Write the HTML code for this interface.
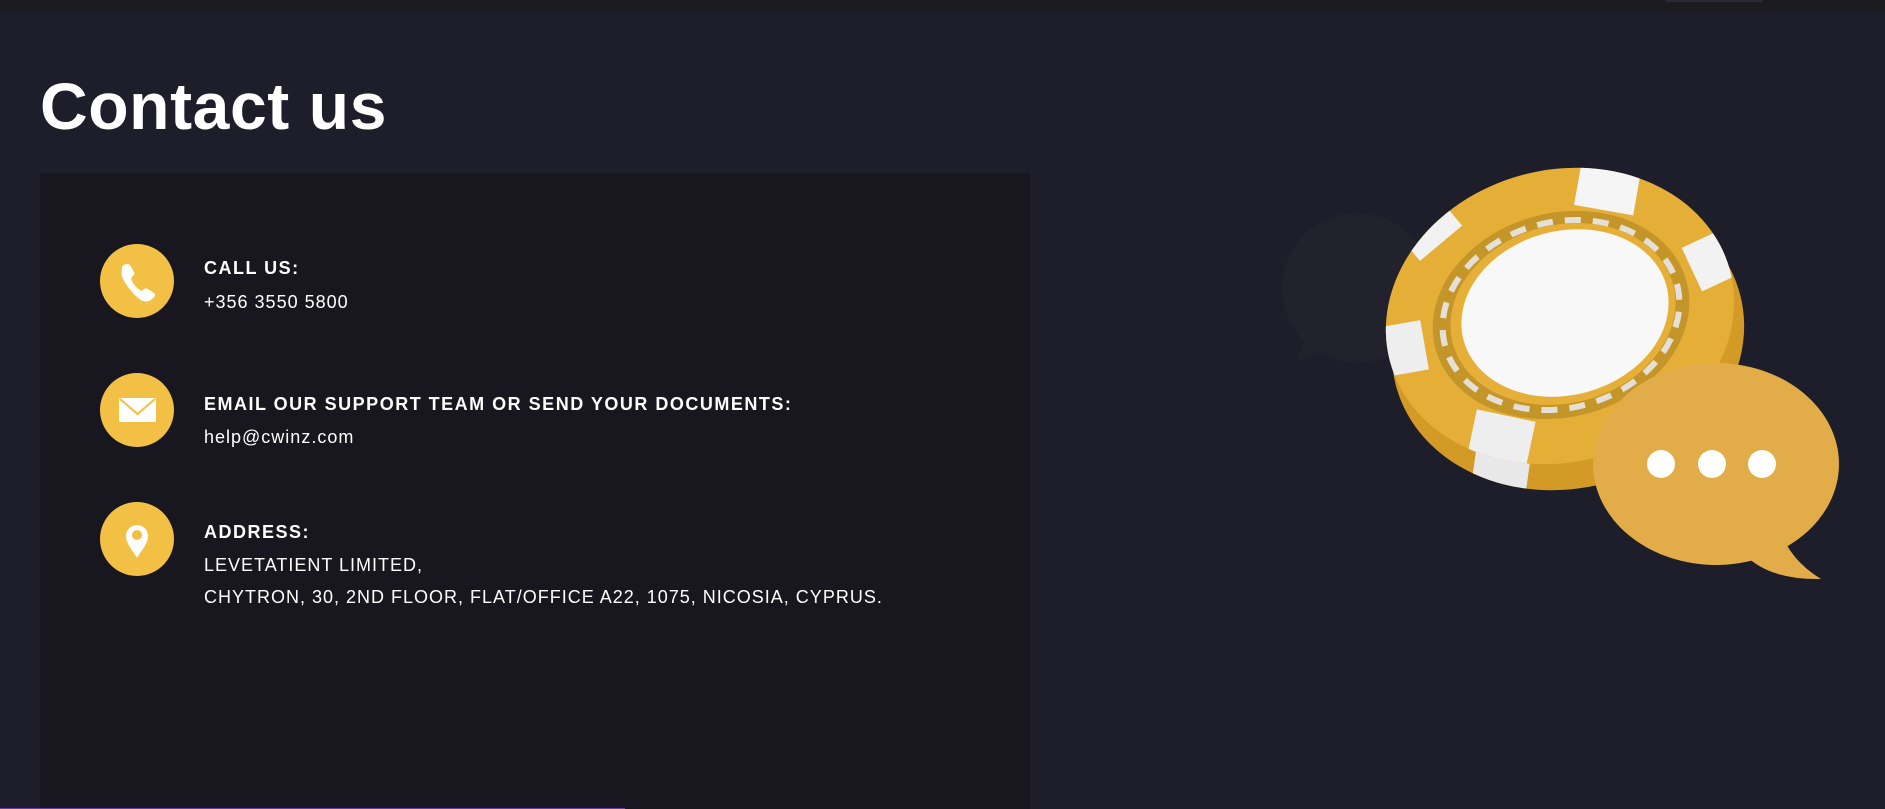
<!DOCTYPE html>
<html><head><meta charset="utf-8"><style>
*{margin:0;padding:0;box-sizing:border-box}
body{width:1885px;height:809px;background:#1e1e2a;overflow:hidden;position:relative;font-family:"Liberation Sans",sans-serif;color:#fff}
.top{position:absolute;left:0;top:0;width:1885px;height:12px;background:#1b1b20}
.tab{position:absolute;left:1665px;top:0;width:98px;height:2px;background:#2a2a34;border-radius:0 0 4px 4px}
h1{position:absolute;left:40px;top:68px;font-size:66px;font-weight:bold;letter-spacing:0.6px}
.card{position:absolute;left:40px;top:173px;width:990px;height:636px;background:#18171f}
.ic{position:absolute;left:100px;width:74px;height:74px;border-radius:50%;background:#f2c044}
.ic svg{position:absolute;left:0;top:0}
.t{position:absolute;left:204px;font-size:18px;line-height:20px;white-space:nowrap;letter-spacing:1px}
.b{font-weight:bold;font-size:18px;letter-spacing:1.5px}
.line{position:absolute;left:0;bottom:0;width:625px;height:1px;background:#6a3aa8}
</style></head><body>
<div class="top"></div><div class="tab"></div>
<h1>Contact us</h1>
<div class="card"></div>
<div class="ic" style="top:244px"><svg width="74" height="74" viewBox="0 0 74 74"><path d="M22 23c2-3 6-4 8-2l4 7c1 2 0 3-2 5-1 1-1 2 0 4 2 4 5 7 8 9 1 1 2 1 3 0 2-2 3-2 5-1l6 4c2 2 1 4-2 6-4 4-10 3-15-2-7-6-12-14-15-20-1-4 0-7 0-10z" fill="#fff"/></svg></div>
<div class="ic" style="top:373px"><svg width="74" height="74" viewBox="0 0 74 74"><rect x="19" y="25" width="37" height="24" rx="2" fill="#fff"/><path d="M20 26l17.5 15L55 26" fill="none" stroke="#f2c044" stroke-width="2"/></svg></div>
<div class="ic" style="top:502px"><svg width="74" height="74" viewBox="0 0 74 74"><path d="M37 56c-4-7-11-14-11-22a11 11 0 0 1 22 0c0 8-7 15-11 22z" fill="#fff"/><circle cx="37" cy="33" r="5" fill="#f2c044"/></svg></div>
<div class="t b" style="top:258px">CALL US:</div>
<div class="t" style="top:292px">+356 3550 5800</div>
<div class="t b" style="top:394px">EMAIL OUR SUPPORT TEAM OR SEND YOUR DOCUMENTS:</div>
<div class="t" style="top:427px">help@cwinz.com</div>
<div class="t b" style="top:522px">ADDRESS:</div>
<div class="t" style="top:555px">LEVETATIENT LIMITED,</div>
<div class="t" style="top:587px">CHYTRON, 30, 2ND FLOOR, FLAT/OFFICE A22, 1075, NICOSIA, CYPRUS.</div>
<div class="line"></div>
<svg style="position:absolute;left:0;top:0" width="1885" height="809">
<defs>
<clipPath id="body"><ellipse cx="1568" cy="340" rx="178" ry="148" transform="rotate(-15 1568 340)"/></clipPath>
<clipPath id="face"><ellipse cx="1560" cy="316" rx="176" ry="146" transform="rotate(-15 1560 316)"/></clipPath>
</defs>
<circle cx="1357" cy="288" r="75" fill="#22222c"/>
<path d="M1305 340 L1296 362 L1330 350 Z" fill="#22222c"/>
<g clip-path="url(#body)">
<rect x="1370" y="160" width="400" height="340" fill="#d39a26"/>
<rect x="1475" y="420" width="55" height="80" fill="#e8e8e8" transform="rotate(8 1500 460)"/>
</g>
<g clip-path="url(#face)">
<rect x="1370" y="160" width="400" height="320" fill="#e5ae36"/>
<rect x="1578" y="160" width="60" height="50" fill="#f5f5f5" transform="rotate(10 1605 185)"/>
<rect x="1400" y="205" width="55" height="45" fill="#f2f2f2" transform="rotate(-40 1425 228)"/>
<rect x="1690" y="235" width="55" height="48" fill="#f2f2f2" transform="rotate(-25 1715 260)"/>
<rect x="1370" y="325" width="55" height="50" fill="#eeeeee" transform="rotate(-10 1395 350)"/>
<rect x="1470" y="415" width="60" height="60" fill="#eeeeee" transform="rotate(12 1500 445)"/>
</g>
<ellipse cx="1561" cy="315" rx="130" ry="102" fill="#c4962a" transform="rotate(-15 1561 315)"/>
<ellipse cx="1561" cy="315" rx="120" ry="93" fill="none" stroke="#e4e0d8" stroke-width="6" stroke-dasharray="16 12" transform="rotate(-15 1561 315)"/>
<ellipse cx="1563" cy="314" rx="114" ry="89" fill="#e6b038" transform="rotate(-15 1563 314)"/>
<ellipse cx="1565" cy="313" rx="105" ry="82" fill="#f8f8f8" transform="rotate(-15 1565 313)"/>
<ellipse cx="1716" cy="464" rx="123" ry="101" fill="#e2ac48"/>
<path d="M1780 530 Q1790 560 1821 579 Q1770 580 1745 555 Z" fill="#e2ac48"/>
<circle cx="1661" cy="464" r="14" fill="#fff"/>
<circle cx="1712" cy="464" r="14" fill="#fff"/>
<circle cx="1762" cy="464" r="14" fill="#fff"/>
</svg>
</body></html>
